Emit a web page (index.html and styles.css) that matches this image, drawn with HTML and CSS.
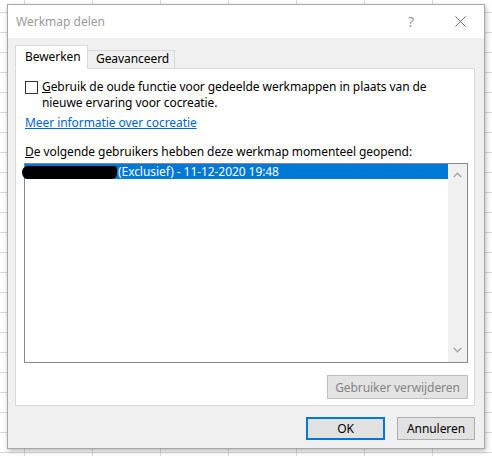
FILE: index.html
```html
<!DOCTYPE html>
<html lang="nl">
<head>
<meta charset="utf-8">
<title>Werkmap delen</title>
<link rel="stylesheet" href="styles.css">
</head>
<body>
<div class="dialog">
  <div class="titlebar">
    <span class="title">Werkmap delen</span>
    <span class="help">?</span>
    <span class="close">
      <svg width="11" height="11" viewBox="0 0 11 11"><path d="M0.5 0.5 L10.5 10.5 M10.5 0.5 L0.5 10.5" stroke="#6b6b6b" stroke-width="1" fill="none"/></svg>
    </span>
  </div>
  <div class="content">
    <div class="tabs">
      <div class="tab active">Bewerken</div>
      <div class="tab">Geavanceerd</div>
    </div>
    <div class="panel">
      <div class="check-row">
        <span class="checkbox"></span>
        <span class="check-text"><u>G</u>ebruik de oude functie voor gedeelde werkmappen in plaats van de<br>nieuwe ervaring voor cocreatie.</span>
      </div>
      <a class="link">Meer informatie over cocreatie</a>
      <div class="label"><u>D</u>e volgende gebruikers hebben deze werkmap momenteel geopend:</div>
      <div class="listbox">
        <div class="rows">
          <div class="row selected"><span class="redact"></span>(Exclusief) - 11-12-2020 19:48</div>
        </div>
        <div class="scrollbar">
          <svg width="9" height="6" viewBox="0 0 9 6"><path d="M0.8 5 L4.5 1.3 L8.2 5" stroke="#a6a6a6" stroke-width="1.4" fill="none"/></svg>
          <svg width="9" height="6" viewBox="0 0 9 6"><path d="M0.8 1 L4.5 4.7 L8.2 1" stroke="#a6a6a6" stroke-width="1.4" fill="none"/></svg>
        </div>
      </div>
      <div class="remove-row">
        <button class="btn disabled">Gebruiker verwijderen</button>
      </div>
    </div>
    <div class="buttons">
      <button class="btn ok">OK</button>
      <button class="btn cancel">Annuleren</button>
    </div>
  </div>
</div>
</body>
</html>
```
FILE: styles.css
```css
html, body {
  margin: 0;
  padding: 0;
}
body {
  width: 492px;
  height: 456px;
  overflow: hidden;
  background-color: #ffffff;
  background-image:
    linear-gradient(to right, #d8d8d8 1px, transparent 1px),
    linear-gradient(to bottom, #d8d8d8 1px, transparent 1px);
  background-size: 68px 20px;
  background-position: 24px 12px;
  font-family: "Noto Sans", "Open Sans", sans-serif;
  font-size: 12px;
  letter-spacing: -0.07px;
  color: #000;
  padding-top: 4px;
  box-sizing: border-box;
}
.dialog {
  margin-left: 7px;
  width: 478px;
  height: 445px;
  border: 1px solid #a8a8a8;
  box-sizing: border-box;
  box-shadow: 1px 2px 5px rgba(0,0,0,0.28);
  display: flex;
  flex-direction: column;
  background: #f0f0f0;
}
.titlebar {
  height: 33px;
  background: #ffffff;
  display: flex;
  align-items: center;
  padding-left: 8px;
  flex-shrink: 0;
}
.title {
  color: #9a9a9a;
  font-size: 12px;
  letter-spacing: 0;
  flex: 1;
}
.help {
  color: #9a9a9a;
  font-size: 14px;
  width: 12px;
  margin-right: 38px;
  text-align: center;
}
.close {
  width: 11px;
  height: 11px;
  margin-right: 18px;
  display: flex;
}
.content {
  flex: 1;
  padding: 7px 9px 0 7px;
  display: flex;
  flex-direction: column;
}
.tabs {
  display: flex;
  align-items: flex-end;
  height: 24px;
  position: relative;
  z-index: 1;
  margin-bottom: -1px;
}
.tab {
  border: 1px solid #d9d9d9;
  background: #f0f0f0;
  height: 19px;
  box-sizing: border-box;
  padding: 0 8px;
  line-height: 16px;
  border-left: none;
}
.tab.active {
  background: #ffffff;
  height: 24px;
  border-left: 1px solid #d9d9d9;
  border-bottom: 1px solid #ffffff;
  width: 73px;
  padding-left: 9px;
  line-height: 22px;
}
.tabs .tab:nth-child(2) {
  width: 87px;
}
.panel {
  background: #ffffff;
  border: 1px solid #d9d9d9;
  height: 338px;
  box-sizing: border-box;
  padding: 10px 0 0 9px;
  display: flex;
  flex-direction: column;
  align-items: flex-start;
}
.check-row {
  display: flex;
  align-items: flex-start;
  line-height: 16px;
}
.checkbox {
  width: 13px;
  height: 13px;
  border: 1px solid #333333;
  box-sizing: border-box;
  margin-top: 2px;
  margin-right: 4px;
  flex-shrink: 0;
}
.link {
  color: #0066cc;
  text-decoration: underline;
  margin-top: 4px;
  line-height: 16px;
}
.label {
  margin-top: 13px;
  line-height: 16px;
}
.listbox {
  margin-top: 3px;
  margin-left: -1px;
  width: 444px;
  height: 200px;
  border: 1px solid #828790;
  box-sizing: border-box;
  display: flex;
}
.rows {
  flex: 1;
}
.row {
  height: 15px;
  line-height: 15px;
  white-space: nowrap;
}
.row.selected {
  background: #0078d7;
  color: #ffffff;
}
.redact {
  display: inline-block;
  vertical-align: top;
  width: 95px;
  height: 13px;
  margin-top: 2px;
  margin-left: -3px;
  margin-right: 1px;
  background: #000000;
  border-radius: 6px 3px 5px 6px;
}
.scrollbar {
  width: 19px;
  background: #f0f0f0;
  display: flex;
  flex-direction: column;
  align-items: center;
  justify-content: space-between;
  padding: 8px 0 9px;
  box-sizing: border-box;
}
.remove-row {
  margin-top: 12px;
  width: 443px;
  display: flex;
  justify-content: flex-end;
}
.btn {
  font-family: "Noto Sans", "Open Sans", sans-serif;
  font-size: 12px;
  letter-spacing: -0.07px;
  background: #e1e1e1;
  border: 1px solid #adadad;
  color: #000;
  padding: 0;
  margin: 0;
  height: 23px;
  line-height: 19px;
}
.btn.disabled {
  width: 141px;
  height: 24px;
  color: #838383;
  border-color: #bfbfbf;
  background: #e3e3e3;
}
.buttons {
  margin-top: 11px;
  display: flex;
  justify-content: flex-end;
  gap: 12px;
}
.btn.ok {
  width: 79px;
  border: 1px solid #0078d7;
  box-shadow: inset 0 0 0 1px #0078d7;
}
.btn.cancel {
  width: 78px;
}
```
